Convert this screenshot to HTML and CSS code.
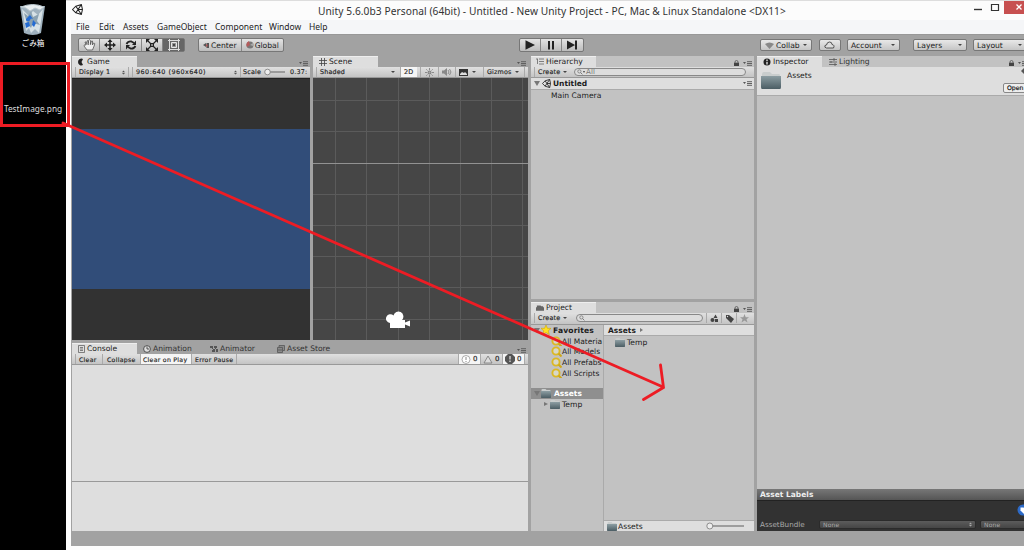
FILE: index.html
```
<!DOCTYPE html>
<html lang="en">
<head>
<meta charset="utf-8">
<title>Unity</title>
<link rel="stylesheet" href="styles.css">
</head>
<body>
<svg class="sprite" aria-hidden="true">
  <symbol id="unity" viewBox="0 0 20 20"><path d="M1 10 7 4l10-3 2 9-2 9-10-3zM7 4l4 6-4 6M11 10h8M17 1l-6 9 6 9" fill="none" stroke="#222" stroke-width="1.900"/></symbol>
  <symbol id="folder" viewBox="0 0 20 17" preserveAspectRatio="none"><path d="M1 2q0-2 2-2h6l2 2h7q1 0 1 2v9H1z" fill="#c9cdcd"/><path d="M0 4h20v11q0 2-1 2H1q-1 0-1-2z" fill="url(#fold)"/></symbol>
  <linearGradient id="fold" x1="0" y1="0" x2="0" y2="1"><stop offset="0" stop-color="#8c9da2"/><stop offset="1" stop-color="#4b5d64"/></linearGradient>
  <symbol id="menu" viewBox="0 0 9 5"><path d="M0 1h3L1.500 3z" fill="#555"/><path d="M4 .7h5M4 2.500h5M4 4.300h5" stroke="#606060"/></symbol>
  <symbol id="lock" viewBox="0 0 5 6"><path d="M0 2.700h5V6H0z" fill="#444"/><path d="M1 3V2q0-1.500 1.500-1.500T4 2v1" fill="none" stroke="#555" stroke-width=".8"/></symbol>
  <symbol id="lens" viewBox="0 0 10 10"><circle cx="4" cy="4" r="2.700" fill="none" stroke="currentColor" stroke-width="1.300"/><path d="m6 6 3 3" stroke="currentColor" stroke-width="1.600"/></symbol>
  <symbol id="favlens" viewBox="0 0 11 11"><circle cx="5" cy="5" r="3.600" fill="#d8d8c8" stroke="#dcb824" stroke-width="1.900"/><path d="m7.500 7.500 3 3" stroke="#cfa818" stroke-width="2"/></symbol>
  <symbol id="updown" viewBox="0 0 4 6"><path d="M0 2.500h4L2 .3zM0 3.500h4L2 5.700z" fill="currentColor"/></symbol>
</svg>
<div class="screen">
  <aside class="desktop">
    <div class="trash">
      <svg width="28" height="33" viewBox="0 0 28 33"><path d="m1 3 4 27q9 4 17 0l4-27z" fill="#9fb1be"/><path d="m3 6 4 22 3-3 2 5 4-4 4 4 4-24-5 6-5-4-4 5z" fill="#d7e1e6"/><path d="m5 10 4 3 3-5 2 6 6-3-2 7 3 4-7-2-2 5-4-5z" fill="#8ba2b2"/><path d="M2 4q12-5 23 0l-4 3-5-2-5 3-4-3z" fill="#e9eef0" stroke="#bac8cf"/><path d="m7 16 4-4 3 4-2-.5-2 3-3-1zm7 1 3 3-2 4-2-2zM6 20l4-1 1 4-4 2z" fill="#246bd2"/></svg>
      <span class="jp">ごみ箱</span>
    </div>
    <div class="testfile"><span>TestImage.png</span></div>
  </aside>
  <main class="window">
    <header class="titlebar">
      <svg class="app-icon"><use href="#unity"/></svg>
      <h1>Unity 5.6.0b3 Personal (64bit) - Untitled - New Unity Project - PC, Mac &amp; Linux Standalone &lt;DX11&gt;</h1>
      <svg class="winctl" width="50" height="14" viewBox="0 0 50 14"><path d="M0 9.500h8" stroke="#333" stroke-width="1.400"/><path d="M17.500 4.500h7v6h-7zM17 4.500h8" fill="none" stroke="#333" stroke-width="1.200"/><path d="M30 1h20v13H30z" fill="#c75050"/><path d="m42.500 4.500 5 5m0-5-5 5" stroke="#fff" stroke-width="1.300"/></svg>
    </header>
    <nav class="menubar"><span class="m1">File</span><span class="m2">Edit</span><span class="m3">Assets</span><span class="m4">GameObject</span><span class="m5">Component</span><span class="m6">Window</span><span>Help</span></nav>
    <div class="toolbar">
      <div class="group tools">
        <b><svg width="13" height="12" viewBox="0 0 13 12"><path d="M4 11 1 7q0-2 2-1L2 3q1-1 2 2V2q1-2 1.500 2V1.500q1-1.500 2 0V5l1-3q1.500-1 1 2v2l1-2q2 0 1 2l-2 5zM4 5v1m1.600-2v2m2-2v2" fill="#eee" stroke="#555" stroke-width=".8"/></svg></b>
        <b><svg width="12" height="12" viewBox="0 0 12 12"><path d="M6 1v10M1 6h10" stroke="#222" stroke-width="1.600"/><path d="m6 0 2.500 3h-5zM6 12 3.500 9h5zM0 6l3-2.500v5zm12 0L9 3.500v5z" fill="#222"/></svg></b>
        <b><svg width="12" height="12" viewBox="0 0 12 12"><path d="M1.500 5Q3 2 6.500 2.500L9 4M10.500 7Q9 10 5.500 9.500L3 8" fill="none" stroke="#222" stroke-width="1.800"/><path d="M11 1.500V6H7zM1 10.500V6h4z" fill="#222"/></svg></b>
        <b><svg width="12" height="12" viewBox="0 0 12 12"><path d="m1 1 10 10M11 1 1 11" stroke="#222" stroke-width="1.200"/><path d="M0 0h4L0 4zm12 0v4L8 0zM0 12V8l4 4zm12 0H8l4-4zM4 4h4v4H4z" fill="#222"/><path d="M5.300 5.300h1.400v1.400H5.300z" fill="#ddd"/></svg></b>
        <b class="on"><svg width="12" height="12" viewBox="0 0 12 12"><path d="M1.500 0v12m9-12v12M0 1.500h12M0 10.500h12" stroke="#ddd"/><path d="M3.500 3.500h5v5h-5z" fill="#999" stroke="#e6e6e6"/><circle cx="6" cy="6" r="1.200" fill="#444"/></svg></b>
      </div>
      <div class="group pivot">
        <b class="c"><svg width="7" height="7" viewBox="0 0 7 7"><path d="M0 3 3 1v4zM3.500 1H6v5H3.500z" fill="#555"/><path d="M3 2.500h1.500v2H3z" fill="#b55"/></svg>Center</b>
        <b class="g"><svg width="8" height="8" viewBox="0 0 8 8"><circle cx="4" cy="4" r="3.500" fill="#777"/><path d="M3 0 4 4 1 6Q-1 2 3 0" fill="#b45b5b"/><path d="m4 4 3-2v3" fill="#aaa"/></svg>Global</b>
      </div>
      <div class="group play">
        <b><svg width="12" height="10" viewBox="0 0 12 10"><path d="m1.500 .3 9.500 4.700-9.500 4.700z" fill="#222"/></svg></b>
        <b><svg width="12" height="10" viewBox="0 0 12 10"><path d="M3 1h2v8.500H3zm4 0h2v8.500H7z" fill="#222"/></svg></b>
        <b><svg width="12" height="10" viewBox="0 0 12 10"><path d="m1 .5 8 4.500-8 4.500zM9 .5h2v9H9z" fill="#222"/></svg></b>
      </div>
      <div class="drop collab"><svg width="9" height="7" viewBox="0 0 9 7"><path d="M0 2q4.500-3 9 0L4.500 7z" fill="#888"/></svg>Collab<i></i></div>
      <div class="drop cloud"><svg width="11" height="8" viewBox="0 0 11 8"><path d="M2.500 7Q0 6.500 1 4.500L2.500 4Q3 1 5.500 1T8 3.500Q11 4 9.500 7z" fill="#ddd" stroke="#444" stroke-width=".9"/></svg></div>
      <div class="drop account">Account<i></i></div>
      <div class="drop layers">Layers<i></i></div>
      <div class="drop layout">Layout<i></i></div>
    </div>
    <div class="docks">
      <div class="leftdock">
        <div class="views">
          <section class="panel game">
            <div class="tabs"><div class="tab"><svg width="8" height="8" viewBox="0 0 8 8"><path d="M6 1a3.400 3.400 0 1 0 0 6L4.500 4z" fill="#222"/></svg>Game</div><svg class="menu"><use href="#menu"/></svg></div>
            <div class="bar"><span class="cell display">Display 1<svg class="ud"><use href="#updown"/></svg></span><span class="cell res"><em>960:640 (960x640)</em><svg class="ud"><use href="#updown"/></svg></span><span class="cell scale">Scale<svg width="21" height="8" viewBox="0 0 21 8"><path d="M5 4h16" stroke="#888" stroke-width="1.500"/><circle cx="3.500" cy="4" r="2.800" fill="#eee" stroke="#777" stroke-width=".8"/></svg><em>0.37:</em></span></div>
            <div class="gameview"><div></div></div>
          </section>
          <section class="panel scene">
            <div class="tabs"><div class="tab"><svg width="8" height="8" viewBox="0 0 8 8"><path d="M2.500 0v8m3-8v8M0 2.500h8m-8 3h8" stroke="#444" stroke-width=".8"/></svg>Scene</div><svg class="menu"><use href="#menu"/></svg></div>
            <div class="bar"><span class="cell shaded">Shaded<i></i></span><span class="cell twod">2D</span><span class="cell ico"><svg width="9" height="9" viewBox="0 0 9 9"><circle cx="4.500" cy="4.500" r="1.500" fill="#aaa" stroke="#666" stroke-width=".8"/><path d="M4.500 0v2m0 5v2M0 4.500h2m5 0h2M1.300 1.300l1.200 1.200m4 4 1.200 1.200m0-6.400L6.500 2.500m-4 4L1.300 7.700" stroke="#777" stroke-width=".8"/></svg></span><span class="cell ico"><svg width="10" height="8" viewBox="0 0 10 8"><path d="M0 2.500h2L5 0v8L2 5.500H0z" fill="#888"/><path d="M6 2q2 2 0 4m1.500-5q3 3 0 6" fill="none" stroke="#777" stroke-width=".8"/></svg></span><span class="cell fx"><svg width="9" height="7" viewBox="0 0 9 7"><path d="M0 0h9v7H0z" fill="#333"/><path d="m1 5 2-2 2 1 1-1 2 2v1H1z" fill="#ddd"/></svg><i></i></span><span class="cell giz">Gizmos<i></i></span><span class="edge"></span></div>
            <div class="sceneview"><svg class="camera" width="26" height="19" viewBox="0 0 26 19"><path d="M5 18v-5a4.400 4.400 0 1 1 3.500-7.500 5 5 0 1 1 8.500 4.500h3v2.500l5-2v6l-5-2V18z" fill="#fff"/></svg></div>
          </section>
        </div>
        <section class="panel console">
          <div class="tabs"><div class="tab"><svg width="7" height="8" viewBox="0 0 7 8"><path d="M.5.5h6v7h-6zM2 2.500h3m-3 1.500h3m-3 1.500h3" fill="none" stroke="#555" stroke-width=".7"/></svg>Console</div>
            <div class="ghost anim"><svg width="8" height="8" viewBox="0 0 8 8"><circle cx="4" cy="4" r="3.400" fill="#ddd" stroke="#444" stroke-width=".9"/><path d="M4 1.500V4h2" fill="none" stroke="#333" stroke-width=".8"/></svg>Animation</div>
            <div class="ghost animator"><svg width="8" height="8" viewBox="0 0 8 8"><path d="M0 1h3v2H0zm4 0h3v2H4zM2 5h3v2H2zM6 4h2v3H6z" fill="#555"/><path d="m2 3 2 2 2-2" stroke="#555" fill="none"/></svg>Animator</div>
            <div class="ghost"><svg width="8" height="8" viewBox="0 0 8 8"><path d="M.5 2.500h5v5h-5zM2 2V.5h5.500v5H6M2 4v2m2-2v2" fill="#8a8a8a" stroke="#555" stroke-width=".8"/></svg>Asset Store</div><svg class="menu"><use href="#menu"/></svg></div>
          <div class="bar"><span class="cell cl">Clear</span><span class="cell co">Collapse</span><span class="cell cp">Clear on Play</span><span class="cell ep">Error Pause</span>
            <div class="counts"><span class="cell count lit"><svg width="10" height="9" viewBox="0 0 10 9"><circle cx="5" cy="4.500" r="4" fill="#fff" stroke="#888" stroke-width=".7"/><path d="M5 2v3m0 1v1" stroke="#888"/></svg>0</span><span class="cell count"><svg width="10" height="9" viewBox="0 0 10 9"><path d="m5 1 4 7H1z" fill="#ddd" stroke="#777" stroke-width=".8"/></svg>0</span><span class="cell count lit"><svg width="10" height="10" viewBox="0 0 10 10"><path d="M3 0h4l3 3v4l-3 3H3L0 7V3z" fill="#555"/><path d="M5 2v3.500m0 1V8" stroke="#fff"/></svg>0</span><span class="edge"></span></div></div>
          <div class="log"></div><div class="detail"></div>
        </section>
      </div>
      <div class="middock">
        <section class="panel hierarchy">
          <div class="tabs"><div class="tab"><svg width="8" height="8" viewBox="0 0 8 8"><path d="M0 1h2m1 0h5M3 3.500h5M3 6h5M1.500 1v5" stroke="#666" stroke-width=".8"/></svg>Hierarchy</div><svg class="lock"><use href="#lock"/></svg><svg class="menu"><use href="#menu"/></svg></div>
          <div class="bar"><span class="cell create">Create<i></i></span><span class="search hs"><svg><use href="#lens"/></svg><i></i>All</span></div>
          <div class="sceneline"><i class="tri"></i><svg class="ulogo"><use href="#unity"/></svg>Untitled<svg class="menu"><use href="#menu"/></svg></div>
          <div class="camrow">Main Camera</div>
        </section>
        <section class="panel project">
          <div class="tabs"><div class="tab"><svg width="8" height="7" viewBox="0 0 9 7"><path d="M0 2h1V0h4l1 1h2v1h1v4H0z" fill="#666"/></svg>Project</div><svg class="lock"><use href="#lock"/></svg><svg class="menu"><use href="#menu"/></svg></div>
          <div class="bar"><span class="cell create">Create<i></i></span><span class="search ps"><svg><use href="#lens"/></svg></span>
            <span class="cell pi"><svg width="9" height="9" viewBox="0 0 9 9"><path d="m5.500.5 2 3.500h-4zM5 5h3v3H5z" fill="#444"/><circle cx="2.500" cy="6" r="2" fill="#444"/></svg></span><span class="cell pi"><svg width="9" height="9" viewBox="0 0 9 9"><path d="M1 1h3l5 4-3 4-5-5z" fill="#444"/><circle cx="2.500" cy="2.500" r=".7" fill="#ddd"/></svg></span><span class="cell pi"><svg width="9" height="9" viewBox="0 0 9 9"><path d="m4.500 0 1.200 3.200H9L6.500 5.300l1 3.200-3-2-3 2 1-3.200L0 3.200h3.300z" fill="#999"/></svg></span></div>
          <div class="projbody">
            <div class="tree">
              <div class="row head"><i class="tri"></i><svg width="10" height="10" viewBox="0 0 9 9"><path d="m4.500 0 1.300 3H9L6.500 5.300l1 3.400-3-2-3 2 1-3.400L0 3h3.200z" fill="#ffdf20" stroke="#c9a100" stroke-width=".5"/></svg><strong>Favorites</strong></div>
              <div class="row fav"><svg><use href="#favlens"/></svg><span>All Materia</span></div>
              <div class="row fav"><svg><use href="#favlens"/></svg><span>All Models</span></div>
              <div class="row fav"><svg><use href="#favlens"/></svg><span>All Prefabs</span></div>
              <div class="row fav"><svg><use href="#favlens"/></svg><span>All Scripts</span></div>
              <div class="row sel"><i class="tri"></i><svg class="fold"><use href="#folder"/></svg><strong>Assets</strong></div>
              <div class="row sub"><i class="tri side"></i><svg class="fold"><use href="#folder"/></svg>Temp</div>
            </div>
            <div class="files">
              <div class="crumb">Assets<i class="tri side"></i></div>
              <div class="file"><svg class="fold"><use href="#folder"/></svg>Temp</div>
              <div class="status"><svg class="fold"><use href="#folder"/></svg>Assets<svg class="slide" width="38" height="8" viewBox="0 0 38 8"><path d="M5 4h33" stroke="#888" stroke-width="1.600"/><circle cx="3.800" cy="4" r="3" fill="#eee" stroke="#777" stroke-width=".8"/></svg></div>
            </div>
          </div>
        </section>
      </div>
      <section class="panel inspector">
        <div class="tabs"><div class="tab"><svg width="8" height="8" viewBox="0 0 8 8"><circle cx="4" cy="4" r="3.500" fill="#222"/><path d="M4 1.500V3m0 .7V6.500" stroke="#fff" stroke-width="1.200"/></svg>Inspector</div><div class="ghost light"><svg width="8" height="8" viewBox="0 0 8 8"><path d="M0 1.500h8M0 4h8M0 6.500h8M5 0v3M2 3v2m4 0v3" stroke="#555" stroke-width=".8"/></svg>Lighting</div><svg class="lock"><use href="#lock"/></svg><svg class="menu"><use href="#menu"/></svg></div>
        <div class="insphead"><svg class="bigfold"><use href="#folder"/></svg><span>Assets</span><div class="right"><svg width="3" height="6" viewBox="0 0 3 6"><path d="M3 0v6L0 3z" fill="#555"/></svg><button>Open</button></div></div>
        <div class="space"></div>
        <div class="labelhead">Asset Labels</div>
        <div class="labels"><svg class="tag" width="14" height="12" viewBox="0 0 14 12"><circle cx="6" cy="6" r="5.500" fill="#2d6bc9"/><path d="M3.500 3.500h3l4 4-3 3-4-4z" fill="#fff"/></svg>
          <div class="bundle"><span>AssetBundle</span><div class="sel1">None<svg class="ud"><use href="#updown"/></svg></div><div class="sel2">None</div></div></div>
      </section>
    </div>
  </main>
  <svg class="arrow" width="1024" height="550" viewBox="0 0 1024 550"><path d="M1.500 63.500h67v62h-67z" fill="none" stroke="#ed1c24" stroke-width="3"/><path d="M63 123l600 264M660.500 365l3 22.500-20 12" fill="none" stroke="#ed1c24" stroke-width="2.800" stroke-linecap="round"/></svg>
</div>
</body>
</html>
```
FILE: styles.css
```
* { box-sizing: border-box; }
body { margin: 0; overflow: hidden; font: 7.6px/11px "DejaVu Sans", Verdana, sans-serif; color: #1c1c1c; }
svg { flex: none; display: block; }
em { font-style: normal; }
span, strong { white-space: nowrap; }
.sprite { position: absolute; width: 0; height: 0; }
.screen { position: relative; display: flex; width: 1024px; height: 550px; overflow: hidden; }
.arrow { position: absolute; left: 0; top: 0; }

.desktop { width: 66px; flex: none; background: #000; color: #ddd; text-align: center; }
.trash { height: 62px; padding-top: 3px; display: flex; flex-direction: column; align-items: center; }
.jp { font: 7.6px/13px "Noto Sans CJK JP", sans-serif; color: #fff; }
.testfile { padding: 41px 0 0; font: 8.3px/12px "Noto Sans", sans-serif; }

.window { width: 958px; flex: none; height: 550px; padding-left: 5px; background: #fcfcfc; border-top: 1px solid #ddd; }
.titlebar { height: 19px; display: flex; align-items: flex-start; }
.app-icon { width: 11px; height: 11px; margin: 3px 0 0 1px; }
h1 { flex: none; width: 656px; margin: 2px 0 0 235px; font: 10.2px/16px "Noto Sans", sans-serif; letter-spacing: .06px; color: #333; white-space: nowrap; }
.winctl { margin: -1px 0 0 auto; width: 50px; }
.menubar { height: 14px; padding-left: 5px; background: #f5f6f8; display: flex; font: 8.500px/14px "Noto Sans", sans-serif; }
.m1 { width: 23px; } .m2 { width: 24px; } .m3 { width: 34px; } .m4 { width: 58px; } .m5 { width: 54px; } .m6 { width: 40px; }
.toolbar { height: 22px; padding: 3px 0 0 7px; background: #a2a2a2; display: flex; border-top: 1px solid #989898; }
.group { display: flex; height: 14px; border: 1px solid #777; border-radius: 2px; background: linear-gradient(#e3e3e3, #bcbcbc); }
.group b { font-weight: 400; display: flex; align-items: center; justify-content: center; border-right: 1px solid #858585; }
.group b:last-child { border: 0; }
.tools { width: 107px; }
.tools b { width: 21.2px; }
.tools .on { background: #666; }
.pivot { width: 86px; margin-left: 13px; }
.pivot svg { margin-right: 1px; }
.pivot .c { width: 43px; } .pivot .g { width: 42px; }
.play { width: 65px; margin-left: 235px; }
.play b { width: 21.3px; }
.drop { height: 12px; margin-top: 1px; padding: 0 4px; border: 1px solid #777; border-radius: 2px; background: linear-gradient(#e8e8e8, #c5c5c5); display: flex; align-items: center; flex: none; }
i { border: 2px solid transparent; border-top: 2.500px solid #444; border-bottom: 0; width: 0; height: 0; flex: none; display: block; margin-left: auto; }
.collab { width: 52px; margin-left: 176px; }
.collab svg { margin-right: 2px; }
.cloud { width: 22px; margin-left: 7px; }
.account { width: 53px; margin-left: 6px; padding-left: 3px; }
.layers { width: 54px; margin-left: 13px; padding-left: 3px; }
.layout { width: 54px; margin-left: 6px; padding-left: 3px; }

.docks { height: 490px; display: flex; gap: 3px; background: #a2a2a2; padding: 0 0 15px 1px; }
.leftdock { width: 456px; flex: none; display: flex; flex-direction: column; gap: 3px; }
.views { height: 284px; display: flex; gap: 3px; }
.panel { display: flex; flex-direction: column; flex: none; overflow: hidden; }
.game { width: 238px; } .scene { width: 215px; }
.console { flex: 1; }
.tabs { height: 11px; flex: none; display: flex; align-items: center; color: #222; }
.tab { width: 65px; height: 11px; padding-left: 5px; background: #dedede; display: flex; align-items: center; gap: 2px; line-height: 10px; flex: none; border-top: 1px solid #eee; }
.scene .tab, .inspector .tab { padding-left: 6px; }
.ghost { display: flex; align-items: center; gap: 2px; color: #333; }
.menu { width: 9px; height: 5px; margin: 4px 2px 0 auto; }
.lock { width: 5px; height: 6px; margin: 2px 4px 0 auto; }
.lock + .menu { margin-left: 0; }
.bar { height: 11px; flex: none; display: flex; background: linear-gradient(#e0e0e0, #c4c4c4); border-bottom: 1px solid #999; font-size: 6.400px; letter-spacing: .17px; padding-left: 3px; -webkit-text-stroke: .15px #222; }
.cell { border-left: 1px solid #aaa; display: flex; align-items: center; padding: 0 3px; flex: none; height: 10px; }
.ud { width: 3px; height: 5px; margin-left: auto; color: #555; }
.display { width: 54px; border-right: 1px solid #aaa; }
.res { width: 108px; margin-left: 3px; }
.res em { letter-spacing: .48px; }
.scale { width: 70px; gap: 3px; padding: 0 0 0 2px; }
.scale em { margin-left: 2px; }
.gameview { height: 262px; padding-top: 50px; background: #323232; border-top: 1px solid #222; }
.gameview div { height: 160px; background: #314d79; }
.shaded { width: 82px; } .twod { width: 17px; background: #f5f5f5; margin-left: 2px; } .ico { width: 17.500px; justify-content: center; }
.twod + .ico { margin-left: 3px; } .fx { width: 24px; } .giz { width: 39px; margin-left: 4px; }
.edge { border-left: 1px solid #aaa; margin-left: auto; width: 4px; }
.sceneview { position: relative; height: 262px; background: linear-gradient(#929292, #929292) 0 85px / 100% 1px no-repeat, repeating-linear-gradient(90deg, #5b5b5b 0 1px, transparent 1px 31.200px) -9px 0 / 250px 100%, repeating-linear-gradient(#5b5b5b 0 1px, transparent 1px 31.200px) 0 -9px / 100% 290px, #464646; }
.camera { position: absolute; left: 72px; top: 232px; }
.console .tab { padding-left: 6px; }
.anim { margin-left: 6px; width: 67px; } .animator { width: 67px; }
.cl { width: 26px; } .co { width: 38px; margin-left: 1px; padding: 0 2px 0 4px; } .cp { width: 51px; background: #f5f5f5; padding: 0 2px; } .ep { width: 46px; border-right: 1px solid #aaa; }
.console .bar { font-size: 6.200px; letter-spacing: .28px; }
.counts { display: flex; margin-left: auto; }
.count { width: 22px; gap: 2px; font-size: 7px; letter-spacing: 0; padding: 0 2px; }
.lit { background: #f5f5f5; }
.log { height: 117px; background: #dedede; border-bottom: 1px solid #999; }
.detail { flex: 1; background: #dedede; }

.middock { width: 223px; flex: none; display: flex; flex-direction: column; gap: 3px; }
.hierarchy { height: 243px; background: #c2c2c2; }
.project { flex: 1; background: #c2c2c2; }
.create { width: 37px; } .create i { margin-left: 3px; }
.search { height: 8px; margin: 1px 8px 0 3px; border: 1px solid #888; border-radius: 5px; background: #ddd; display: flex; align-items: center; color: #777; -webkit-text-stroke: 0; font-size: 7px; flex: 1; padding-left: 2px; }
.search svg { width: 6px; height: 6px; }
.search i { margin: 0 1px 0 0; border-left-width: 1.500px; border-right-width: 1.500px; }
.ps { flex: none; width: 127px; margin: 1px 3px 0 5px; }
.pi { width: 15px; padding: 0; justify-content: center; }
.sceneline { height: 12px; background: #dedede; border-bottom: 1px solid #aaa; display: flex; align-items: center; font-weight: 700; font-size: 7.500px; padding-left: 3px; }
.tri { margin: 0; border-width: 5px 3px 0; border-top-color: #777; }
.tri.side { border: 2.500px solid transparent; border-left: 4px solid #777; border-right: 0; }
.ulogo { width: 9px; height: 9px; margin: 0 2px; }
.sceneline .menu { margin-top: 0; }
.camrow { padding-left: 20px; line-height: 11px; }
.project .bar { height: 12px; }
.projbody { flex: 1; display: flex; }
.tree { width: 73px; overflow: hidden; border-right: 1px solid #aaa; }
.row { height: 10.700px; display: flex; align-items: center; padding-left: 3px; font-size: 7.600px; gap: 1px; overflow: hidden; }
.head strong { margin-left: 1px; font-size: 7.600px; letter-spacing: .15px; }
.fav { padding-left: 20px; gap: 0; }
.fav svg { width: 11px; height: 11px; }
.fav span { font-size: 7.500px; }
.sel { background: #8f8f8f; color: #fff; margin-top: 10px; font-size: 7.500px; }
.sel strong { margin-left: 2px; }
.sub { padding-left: 13px; gap: 2px; }
.fold { width: 10px; height: 9px; }
.files { flex: 1; display: flex; flex-direction: column; }
.crumb { height: 11px; background: #dedede; border-bottom: 1px solid #aaa; padding-left: 4px; font-weight: 700; font-size: 7.500px; display: flex; align-items: center; gap: 4px; }
.crumb .tri { border-width: 2px 0 2px 3px; }
.file { display: flex; align-items: center; padding: 1px 0 0 11px; gap: 2px; font-size: 7.600px; }
.status { height: 11px; margin-top: auto; background: #dedede; border-top: 1px solid #aaa; display: flex; align-items: center; padding-left: 3px; gap: 1px; }
.slide { margin: 0 10px 0 auto; }
.inspector { width: 267px; background: #c2c2c2; }
.light { flex: none; width: 48px; margin-left: 7px; }
.inspector .tabs .lock { margin: 2px 4px 0 132px; }
.insphead { height: 29px; background: #dedede; border-bottom: 1px solid #aaa; display: flex; padding: 5px 0 0 4px; }
.bigfold { width: 20px; height: 17px; }
.insphead span { margin: -2px 0 0 6px; }
.right { margin-left: auto; width: 21px; display: flex; flex-direction: column; align-items: flex-start; }
.right svg { margin: -4px 0 9px 18px; }
button { flex: none; width: 27px; height: 10px; padding: 0 3px; border: 1px solid #888; border-radius: 2px; background: #eee; font: 6.200px/8px "DejaVu Sans", sans-serif; text-align: left; -webkit-text-stroke: .15px #222; }
.space { flex: 1; }
.labelhead { height: 11px; background: linear-gradient(#777, #555); color: #eee; font-weight: 700; font-size: 7.500px; line-height: 11px; padding-left: 3px; }
.labels { height: 31px; padding: 3px 0 0 3px; background: #323232; border-top: 1px solid #222; color: #aaa; }
.tag { margin-left: 257px; }
.bundle { display: flex; align-items: center; height: 15px; font-size: 7.200px; padding-top: 2px; }
.bundle span { flex: none; width: 59px; }
.bundle .ud { color: #aaa; }
.sel1, .sel2 { flex: none; height: 9px; width: 157px; background: linear-gradient(#5c5c5c, #454545); border: 1px solid #2b2b2b; border-radius: 2px; display: flex; align-items: center; padding: 0 3px; font-size: 6px; letter-spacing: .2px; }
.sel2 { margin-left: 4px; width: 48px; }
```
